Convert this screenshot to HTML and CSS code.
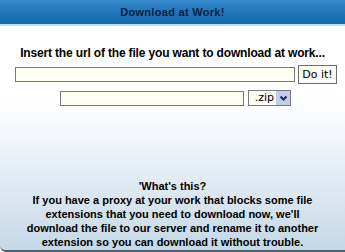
FILE: index.html
```
<!DOCTYPE html>
<html>
<head>
<meta charset="utf-8">
<link rel="stylesheet" href="styles.css">
</head>
<body>
<div class="panel">
  <div class="header">Download at Work!</div>
  <div class="content">
    <p class="lead">Insert the url of the file you want to download at work...</p>
    <div class="row row1">
      <input class="url" type="text">
      <button class="doit">Do it!</button>
    </div>
    <div class="row row2">
      <input class="name" type="text">
      <div class="select"><span class="ext">.zip</span><span class="arrow"><svg width="11" height="11" viewBox="0 0 11 11"><path d="M2.5 3.5 L5.5 6.5 L8.5 3.5" fill="none" stroke="#1c2a6a" stroke-width="2"/></svg></span></div>
    </div>
    <div class="info">
      <p>'What's this?</p>
      <p>If you have a proxy at your work that blocks some file extensions that you need to download now, we'll download the file to our server and rename it to another extension so you can download it without trouble.</p>
    </div>
  </div>
</div>
</body>
</html>
```
FILE: styles.css
```
html, body {
  margin: 0;
  padding: 0;
}
body {
  width: 345px;
  height: 252px;
  overflow: hidden;
  font-family: "Liberation Sans", Arial, sans-serif;
}
.panel {
  width: 345px;
  height: 252px;
  display: flex;
  flex-direction: column;
  background: linear-gradient(to bottom, #ffffff 0px, #ffffff 95px, #f2f6fa 140px, #c4d8e6 250px);
  border-bottom: 2px solid #4e6474;
  border-bottom-left-radius: 6px;
  box-sizing: border-box;
}
.header {
  height: 24px;
  line-height: 24px;
  text-align: center;
  font-weight: bold;
  font-size: 11px;
  letter-spacing: 0.3px;
  color: #071e40;
  background: linear-gradient(to bottom, #3a8ccc 0%, #2277bb 45%, #1766ac 100%);
  border-bottom: 2px solid #b8e0f6;
}
.content {
  flex: 1;
  display: flex;
  flex-direction: column;
  align-items: center;
}
.lead {
  margin: 20px 0 0 0;
  font-size: 12px;
  letter-spacing: -0.16px;
  font-weight: bold;
  color: #000;
  line-height: 14px;
}
.row {
  display: flex;
  align-items: center;
}
.row1 {
  margin-top: 5px;
  width: 322px;
  margin-left: 15px;
  align-self: flex-start;
}
.url {
  width: 280px;
  height: 15px;
  box-sizing: border-box;
  border: 1px solid #7a7a7a;
  background: #fffff2;
  padding: 0;
  margin: 0;
}
.doit {
  margin-left: 3px;
  width: 39px;
  height: 19px;
  box-sizing: border-box;
  border: 1px solid #6e6e6e;
  background: #fbfbf6;
  font-family: "DejaVu Sans", Verdana, sans-serif;
  font-size: 11px;
  padding: 0;
  color: #000;
}
.row2 {
  margin-top: 6px;
  margin-left: 60px;
  align-self: flex-start;
}
.name {
  width: 184px;
  height: 15px;
  box-sizing: border-box;
  border: 1px solid #7a7a7a;
  background: #fffff2;
  padding: 0;
  margin: 0;
}
.select {
  margin-left: 4px;
  width: 43px;
  height: 16px;
  box-sizing: border-box;
  border: 1px solid #7a7a7a;
  background: #fbfbf6;
  display: flex;
  align-items: stretch;
  font-family: "DejaVu Sans", Verdana, sans-serif;
  font-size: 11px;
}
.ext {
  flex: 1;
  text-align: right;
  padding-right: 1px;
  line-height: 14px;
}
.arrow {
  width: 14px;
  background: #c4cce8;
  border-left: 1px solid #ffffff;
  display: flex;
  align-items: center;
  justify-content: center;
}
.info {
  margin-top: auto;
  margin-bottom: 1px;
  text-align: center;
  font-size: 11px;
  font-weight: bold;
  line-height: 14px;
  color: #000;
  width: 300px;
}
.info p {
  margin: 0;
}
```
